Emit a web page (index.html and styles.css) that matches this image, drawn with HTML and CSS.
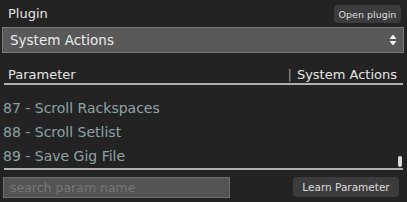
FILE: index.html
```html
<!DOCTYPE html>
<html lang="en">
<head>
    <meta charset="UTF-8">
    <title>Plugin Parameter</title>
    <link rel="stylesheet" href="styles.css">
</head>
<body>
    <div class="panel">
        <div class="top">
            <span class="label">Plugin</span>
            <button class="btn btn-open">Open plugin</button>
        </div>

        <div class="select">
            <span>System Actions</span>
            <svg class="arrows" width="8" height="12" viewBox="0 0 8 12">
                <path d="M4 0.5 L7.5 5 L0.5 5 Z" fill="#f0f0f0"/>
                <path d="M4 11.5 L7.5 7 L0.5 7 Z" fill="#f0f0f0"/>
            </svg>
        </div>

        <div class="header">
            <span>Parameter</span>
            <span class="header-right"><span class="pipe">|</span>System Actions</span>
        </div>

        <div class="list">
            <div class="row">87 - Scroll Rackspaces</div>
            <div class="row">88 - Scroll Setlist</div>
            <div class="row">89 - Save Gig File</div>
            <div class="thumb"></div>
        </div>

        <div class="footer">
            <input class="search" type="text" placeholder="search param name">
            <button class="btn btn-learn">Learn Parameter</button>
        </div>
    </div>
</body>
</html>
```

FILE: styles.css
```css
body {
    margin: 0;
    background: #232323;
    font-family: 'DejaVu Sans', Verdana, sans-serif;
    color: #e6e6e6;
}

.panel {
    width: 407px;
    height: 202px;
    display: flex;
    flex-direction: column;
}

.top {
    height: 27px;
    display: flex;
    justify-content: space-between;
    align-items: flex-start;
}

.label {
    font-size: 13px;
    line-height: 16px;
    margin: 6px 0 0 8px;
}

.btn {
    background: #3c3c3c;
    color: #dcdcdc;
    border: none;
    border-radius: 4px;
    font-family: 'DejaVu Sans', Verdana, sans-serif;
    padding: 0;
    cursor: pointer;
}

.btn-open {
    width: 67px;
    height: 18px;
    margin: 5px 6px 0 0;
    font-size: 9.5px;
}

.select {
    height: 24px;
    margin: 0 3px 0 2px;
    background: #595959;
    border: 1px solid #7a7a7a;
    display: flex;
    align-items: center;
    justify-content: space-between;
    padding: 0 6px 0 7px;
    font-size: 13.5px;
    color: #ececec;
}

.arrows {
    display: block;
}

.header {
    display: flex;
    justify-content: space-between;
    margin: 0 4px;
    padding: 14px 6px 0 4px;
    font-size: 13px;
    line-height: 16px;
    border-bottom: 2px solid #b0b0b0;
}

.pipe {
    color: #9a9a9a;
    margin-right: 5px;
}

.list {
    position: relative;
    height: 72px;
    padding-top: 11px;
    margin: 0 4px;
    border-bottom: 2px solid #b0b0b0;
}

.row {
    height: 24px;
    line-height: 24px;
    font-size: 14px;
    color: #8ea3a6;
    margin-left: -1px;
}

.thumb {
    position: absolute;
    right: 1px;
    bottom: 1px;
    width: 4px;
    height: 11px;
    border-radius: 2px;
    background: #dcdcdc;
}

.footer {
    display: flex;
    justify-content: space-between;
    align-items: flex-start;
    padding-top: 7px;
}

.search {
    box-sizing: border-box;
    width: 227px;
    height: 21px;
    margin-left: 3px;
    background: #545454;
    border: 1px solid #6e6e6e;
    padding: 0 6px;
    font-family: 'DejaVu Sans', Verdana, sans-serif;
    font-size: 12.5px;
    color: #ddd;
}

.search::placeholder {
    color: #777;
}

.btn-learn {
    width: 106px;
    height: 20px;
    margin-right: 8px;
    font-size: 10.5px;
}
```
